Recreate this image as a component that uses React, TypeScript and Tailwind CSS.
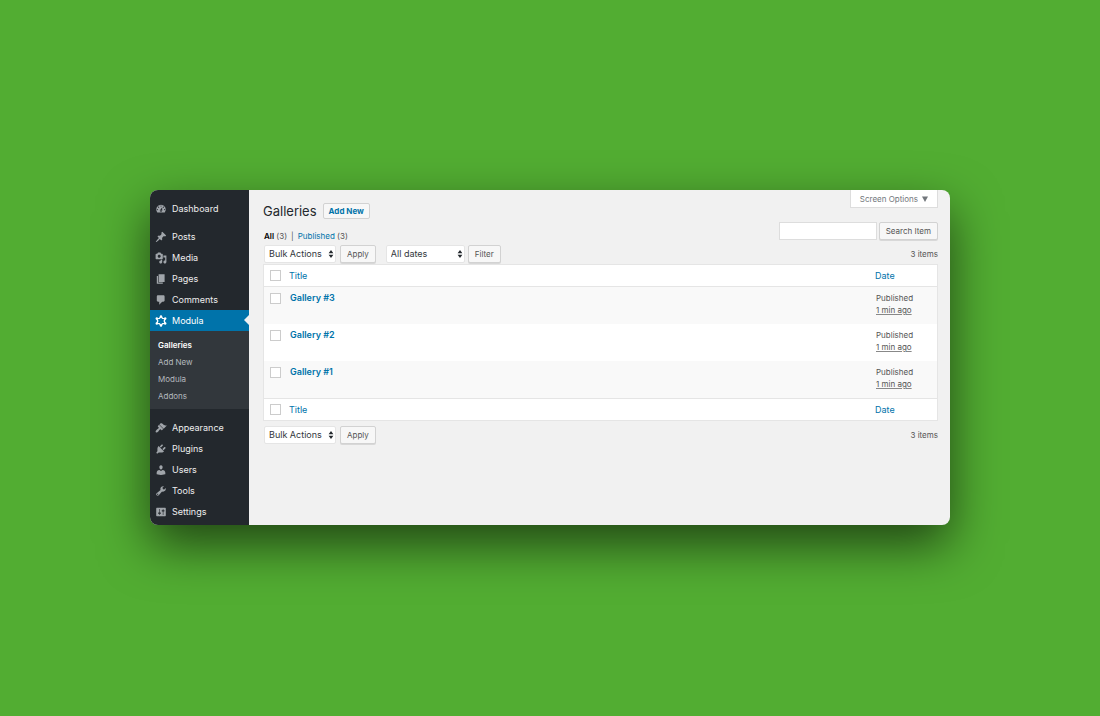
import React from "react";

const icons = {
  dashboard:
    "M3.76 16h12.48A7.998 7.998 0 0 0 10 3a7.998 7.998 0 0 0-6.24 13zM10 4c.55 0 1 .45 1 1s-.45 1-1 1-1-.45-1-1 .45-1 1-1zM6 6c.55 0 1 .45 1 1s-.45 1-1 1-1-.45-1-1 .45-1 1-1zm8 0c.55 0 1 .45 1 1s-.45 1-1 1-1-.45-1-1 .45-1 1-1zm-5.37 5.55L12 7v6c0 1.1-.9 2-2 2s-2-.9-2-2c0-.57.24-1.08.63-1.45zM4 10c.55 0 1 .45 1 1s-.45 1-1 1-1-.45-1-1 .45-1 1-1zm12 0c.55 0 1 .45 1 1s-.45 1-1 1-1-.45-1-1 .45-1 1-1zm-5 3c0-.55-.45-1-1-1s-1 .45-1 1 .45 1 1 1 1-.45 1-1z",
  posts:
    "M10.44 3.02l1.82-1.82 6.36 6.35-1.83 1.82c-1.05-.68-2.48-.57-3.41.36l-.75.75c-.92.93-1.04 2.35-.35 3.41l-1.83 1.82-2.41-2.41-2.8 2.79c-.42.42-3.38 2.71-3.8 2.29s1.86-3.39 2.28-3.81l2.79-2.79L4.1 9.36l1.83-1.82c1.05.69 2.48.57 3.4-.36l.75-.75c.93-.92 1.05-2.35.36-3.41z",
  media:
    "M13 11V4c0-.55-.45-1-1-1h-1.67L9 1H5L3.67 3H2c-.55 0-1 .45-1 1v7c0 .55.45 1 1 1h10c.55 0 1-.45 1-1zM7 4.5c1.38 0 2.5 1.12 2.5 2.5S8.38 9.5 7 9.5 4.5 8.38 4.5 7 5.62 4.5 7 4.5zM14 6h5v10.5c0 1.38-1.12 2.5-2.5 2.5S14 17.88 14 16.5s1.12-2.5 2.5-2.5c.17 0 .34.02.5.05V9h-3V6zm-4 8.05V13h2v3.5c0 1.38-1.12 2.5-2.5 2.5S7 17.88 7 16.5 8.12 14 9.5 14c.17 0 .34.02.5.05z",
  pages: "M6 15V2h10v13H6zm-1 1h8v2H3V5h2v11z",
  comments:
    "M5 2h9c1.1 0 2 .9 2 2v7c0 1.1-.9 2-2 2h-2l-5 5v-5H5c-1.1 0-2-.9-2-2V4c0-1.1.9-2 2-2z",
  appearance:
    "M14.48 11.06L7.41 3.99l1.5-1.5c.5-.56 2.3-.47 3.51.32 1.21.8 1.43 1.28 2.91 2.1 1.18.64 2.45 1.26 4.45.85zm-.71.71L6.7 4.7 4.93 6.47c-.39.39-.39 1.02 0 1.41l1.06 1.06c.39.39.39 1.03 0 1.42-.6.6-1.43 1.11-2.21 1.69-.35.26-.7.53-1.01.84C1.43 14.23.4 16.08 1.4 17.07c.99 1 2.84-.03 4.18-1.36.31-.31.58-.66.85-1.02.57-.78 1.08-1.61 1.69-2.21.39-.39 1.02-.39 1.41 0l1.06 1.06c.39.39 1.02.39 1.41 0z",
  plugins:
    "M13.11 4.36L9.87 7.6 8 5.73l3.24-3.24c.35-.34 1.05-.2 1.56.32.52.51.66 1.21.31 1.55zm-8 1.77l.91-1.12 9.01 9.01-1.19.84c-.71.71-2.63 1.16-3.82 1.16H6.14L4.9 17.26c-.59.59-1.54.59-2.12 0-.59-.58-.59-1.53 0-2.12l1.24-1.24v-3.88c0-1.13.4-3.19 1.09-3.89zm7.26 3.97l3.24-3.24c.34-.35 1.04-.21 1.55.31.52.51.66 1.21.31 1.55l-3.24 3.25z",
  users:
    "M10 9.25c-2.27 0-2.73-3.44-2.73-3.44C7 4.02 7.82 2 9.97 2c2.16 0 2.98 2.02 2.71 3.81 0 0-.41 3.44-2.68 3.44zm0 2.57L12.72 10c2.39 0 4.52 2.33 4.52 4.53v2.49s-3.65 1.13-7.24 1.13c-3.65 0-7.24-1.13-7.24-1.13v-2.49c0-2.25 1.94-4.48 4.47-4.48z",
  tools:
    "M16.68 9.77c-1.34 1.34-3.3 1.67-4.95.99l-5.41 6.52c-.99.99-2.59.99-3.58 0s-.99-2.59 0-3.57l6.52-5.42c-.68-1.65-.35-3.61.99-4.95 1.28-1.28 3.12-1.62 4.72-1.06l-2.89 2.89 2.82 2.82 2.86-2.87c.53 1.58.18 3.39-1.08 4.65zM3.81 16.21c.4.39 1.04.39 1.43 0 .4-.4.4-1.04 0-1.43-.39-.4-1.03-.4-1.43 0-.39.39-.39 1.03 0 1.43z",
  settings:
    "M18 16V4c0-.55-.45-1-1-1H3c-.55 0-1 .45-1 1v12c0 .55.45 1 1 1h14c.55 0 1-.45 1-1zM8 11h1c.55 0 1 .45 1 1s-.45 1-1 1H8v1.5c0 .28-.22.5-.5.5s-.5-.22-.5-.5V13H6c-.55 0-1-.45-1-1s.45-1 1-1h1V5.5c0-.28.22-.5.5-.5s.5.22.5.5V11zm5-2h-1c-.55 0-1-.45-1-1s.45-1 1-1h1V5.5c0-.28.22-.5.5-.5s.5.22.5.5V7h1c.55 0 1 .45 1 1s-.45 1-1 1h-1v5.5c0 .28-.22.5-.5.5s-.5-.22-.5-.5V9z",
};

type IconName = keyof typeof icons;

function MenuLink({ icon, label }: { icon: IconName; label: string }) {
  return (
    <li>
      <a href="#" className="flex h-[21px] items-center gap-[5px] pl-[5px] text-[#eeeeee]">
        <svg viewBox="0 0 20 20" className="size-3 shrink-0 fill-[#a0a5aa]" aria-hidden="true">
          <path fillRule="evenodd" d={icons[icon]} />
        </svg>
        {label}
      </a>
    </li>
  );
}

function ModulaIcon() {
  return (
    <svg viewBox="0 0 20 20" className="size-3 shrink-0" aria-hidden="true">
      <path
        d="M10 2.6 12.6 5.7 16.8 6.1 15.4 10 16.8 13.9 12.6 14.3 10 17.4 7.4 14.3 3.2 13.9 4.6 10 3.2 6.1 7.4 5.7Z"
        fill="none"
        stroke="#fff"
        strokeWidth="2.3"
        strokeLinejoin="round"
      />
      <g fill="#fff">
        <circle cx="10" cy="2.3" r="2" />
        <circle cx="17" cy="5.9" r="2" />
        <circle cx="17" cy="14.1" r="2" />
        <circle cx="10" cy="17.7" r="2" />
        <circle cx="3" cy="14.1" r="2" />
        <circle cx="3" cy="5.9" r="2" />
      </g>
    </svg>
  );
}

function Sidebar() {
  return (
    <nav className="w-[99px] shrink-0 bg-[#23282d] pt-2 pb-[3px] text-[9px]">
      <ul className="mb-[7px]">
        <MenuLink icon="dashboard" label="Dashboard" />
      </ul>
      <ul>
        <MenuLink icon="posts" label="Posts" />
        <MenuLink icon="media" label="Media" />
        <MenuLink icon="pages" label="Pages" />
        <MenuLink icon="comments" label="Comments" />
        <li>
          <a
            href="#"
            aria-current="page"
            className="relative flex h-[21px] items-center gap-[5px] bg-[#0073aa] pl-[5px] text-white"
          >
            <ModulaIcon />
            Modula
            <svg viewBox="0 0 5 10" className="absolute top-[5px] right-0 h-[10px] w-[5px]" aria-hidden="true">
              <path d="M5 0v10L0 5z" fill="#f1f1f1" />
            </svg>
          </a>
          <ul className="bg-[#32373c] py-[5px] text-[8px] text-[#b4b9be]">
            {["Galleries", "Add New", "Modula", "Addons"].map((label, i) => (
              <li key={label}>
                <a
                  href="#"
                  className={
                    i === 0
                      ? "flex h-[17px] items-center pl-2 font-semibold text-white"
                      : "flex h-[17px] items-center pl-2"
                  }
                >
                  {label}
                </a>
              </li>
            ))}
          </ul>
        </li>
      </ul>
      <ul className="mt-2">
        <MenuLink icon="appearance" label="Appearance" />
        <MenuLink icon="plugins" label="Plugins" />
        <MenuLink icon="users" label="Users" />
        <MenuLink icon="tools" label="Tools" />
        <MenuLink icon="settings" label="Settings" />
      </ul>
    </nav>
  );
}

function Button({ children }: { children: React.ReactNode }) {
  return (
    <button
      type="button"
      className="h-[18px] rounded-[2px] border border-[#d2d2d2] bg-[#f7f7f7] px-[6px] leading-none whitespace-nowrap text-[#555555] shadow-[0_1px_0_#d8d8d8]"
    >
      {children}
    </button>
  );
}

function Select({ label, value, wide = false }: { label: string; value: string; wide?: boolean }) {
  return (
    <div className={wide ? "relative w-[79px]" : "relative w-[72px]"}>
      <select
        aria-label={label}
        className="block h-[18px] w-full appearance-none rounded-[2px] border border-[#e5e5e5] bg-white pl-1 text-[9px] text-[#32373c]"
      >
        <option>{value}</option>
      </select>
      <svg
        viewBox="0 0 6 8"
        className="pointer-events-none absolute top-[5px] right-[2px] h-2 w-[6px] fill-[#23282d]"
        aria-hidden="true"
      >
        <path d="M3 0l2.4 3.2H.6zM3 8L.6 4.8h4.8z" />
      </svg>
    </div>
  );
}

function BulkActions() {
  return (
    <div className="flex gap-1">
      <Select label="Bulk actions" value="Bulk Actions" />
      <Button>Apply</Button>
    </div>
  );
}

function Checkbox({ label }: { label: string }) {
  return (
    <input
      type="checkbox"
      aria-label={label}
      className="block size-[11px] appearance-none border border-[#cccccc] bg-white"
    />
  );
}

function ColumnTitles() {
  return (
    <tr className="h-[22px] bg-white text-[#0073aa]">
      <td className="w-[25px] pl-[6px]">
        <Checkbox label="Select all" />
      </td>
      <th scope="col" className="text-left font-normal">
        <a href="#">Title</a>
      </th>
      <th scope="col" className="w-[62px] text-left font-normal">
        <a href="#">Date</a>
      </th>
    </tr>
  );
}

const galleries = ["Gallery #3", "Gallery #2", "Gallery #1"];

function GalleryTable() {
  return (
    <table className="w-full border-separate border-spacing-0 border border-[#e5e5e5] text-[9px]">
      <thead className="[&_td]:border-b [&_td]:border-[#e5e5e5] [&_th]:border-b [&_th]:border-[#e5e5e5]">
        <ColumnTitles />
      </thead>
      <tbody>
        {galleries.map((name) => (
          <tr key={name} className="h-[37px] align-top odd:bg-[#f9f9f9] even:bg-white">
            <td className="pt-[6px] pl-[6px]">
              <Checkbox label={`Select ${name}`} />
            </td>
            <td className="pt-[5px] pl-px leading-3 font-semibold">
              <a href="#" className="text-[#0073aa]">
                {name}
              </a>
            </td>
            <td className="pt-[5px] pl-px text-[8px] leading-3">
              Published
              <br />
              <abbr
                title="1 minute ago"
                className="underline decoration-[#888888] decoration-solid decoration-1 underline-offset-1"
              >
                1 min ago
              </abbr>
            </td>
          </tr>
        ))}
      </tbody>
      <tfoot className="[&_td]:border-t [&_td]:border-[#e5e5e5] [&_th]:border-t [&_th]:border-[#e5e5e5]">
        <ColumnTitles />
      </tfoot>
    </table>
  );
}

export default function App() {
  return (
    <div className="flex min-h-screen items-center justify-center bg-[#52ad32] px-8 pt-8 pb-[33px] font-['Inter',sans-serif] text-[8px] leading-3 text-[#555555]">
      <div className="flex w-full max-w-[800px] overflow-hidden rounded-lg bg-[#f1f1f1] shadow-[0_20px_50px_rgba(0,0,0,0.6)]">
        <Sidebar />
        <main className="min-w-0 flex-1 pr-3 pl-[14px]">
          <header className="flex items-start justify-between">
            <div className="flex items-center gap-[6px] pt-3">
              <h1 className="text-[13px] leading-[18px] text-[#23282d]">Galleries</h1>
              <a
                href="#"
                className="rounded-[2px] border border-[#d2d2d2] bg-[#f7f7f7] px-[5px] py-px font-bold text-[#0073aa]"
              >
                Add New
              </a>
            </div>
            <button
              type="button"
              className="flex h-[18px] items-center gap-1 border border-t-0 border-[#dddddd] bg-white px-[9px] text-[#72777c]"
            >
              Screen Options
              <svg viewBox="0 0 6 6" className="size-[6px] fill-[#72777c]" aria-hidden="true">
                <path d="M0 .5h6L3 6z" />
              </svg>
            </button>
          </header>

          <div className="mt-[2px] flex items-end justify-between">
            <div className="flex items-center gap-1 pl-px">
              <a href="#">
                <span className="font-semibold text-black">All</span> (3)
              </a>
              <span>|</span>
              <a href="#">
                <span className="text-[#0073aa]">Published</span> (3)
              </a>
            </div>
            <form className="flex gap-[2px] pb-[2px]">
              <input
                type="search"
                aria-label="Search items"
                className="h-[18px] w-[98px] border border-[#dddddd] bg-white px-1"
              />
              <Button>Search Item</Button>
            </form>
          </div>

          <div className="mt-[3px] flex items-center justify-between pl-px">
            <div className="flex gap-[10px]">
              <BulkActions />
              <div className="flex gap-[3px]">
                <Select label="Filter by date" value="All dates" wide />
                <Button>Filter</Button>
              </div>
            </div>
            <span>3 items</span>
          </div>

          <div className="mt-px mb-[5px]">
            <GalleryTable />
          </div>

          <div className="flex items-center justify-between pl-px">
            <BulkActions />
            <span>3 items</span>
          </div>
        </main>
      </div>
    </div>
  );
}
